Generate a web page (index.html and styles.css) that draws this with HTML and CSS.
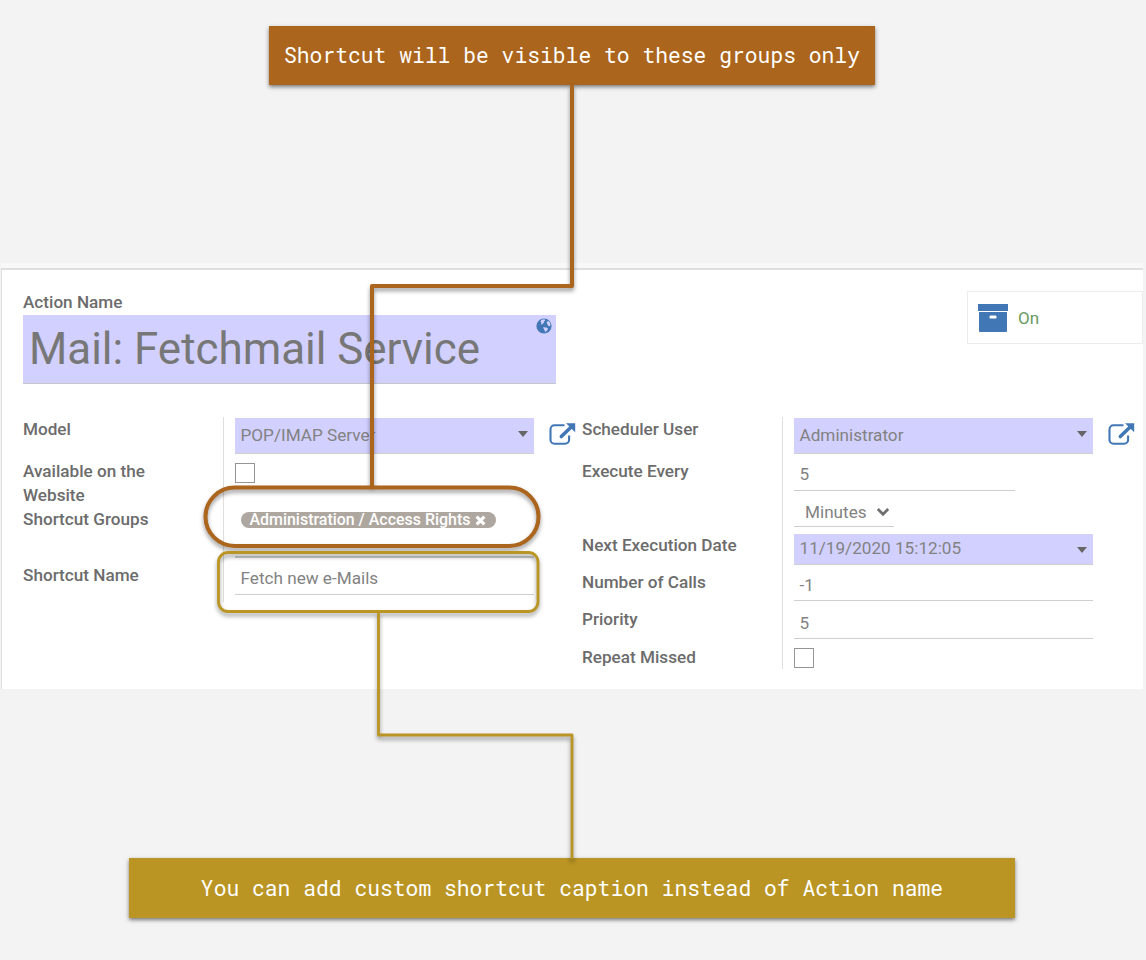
FILE: index.html
```
<!DOCTYPE html>
<html lang="en">
<head>
<meta charset="utf-8">
<title>Mail: Fetchmail Service</title>
<link rel="stylesheet" href="styles.css">
</head>
<body>
<div class="page">
  <div class="callout callout-groups">Shortcut will be visible to these groups only</div>

  <main class="sheet">
    <header class="head">
      <div class="title-block">
        <div class="label">Action Name</div>
        <div class="title-field">
          <span class="title-text">Mail: Fetchmail Service</span>
          <svg class="globe" viewBox="0 0 16 16"><circle cx="8" cy="8" r="7.6" fill="#4277b6"/><path d="M5.6 1.7 8.4 1.3 9.4 2.4 7.8 3.2 8.4 4.2 7.2 5.2 6.1 6.4 4.9 6.2 5.4 4.6 4.4 3.4ZM10.6 4 12.8 3 14.4 5.6 14.3 8 12.8 8.2 11.4 6.6ZM7 9.2 10.4 9.6 12.2 10.8 11 12.4 9.4 14.2 8.4 12Z" fill="#d2d0fe"/></svg>
        </div>
      </div>
      <div class="stat">
        <svg class="archive" viewBox="0 0 30 28"><path fill="#4277b6" d="M0 0h30v7H0zM1 8h28v19a1 1 0 0 1-1 1H2a1 1 0 0 1-1-1z"/><rect x="11.5" y="11.6" width="7" height="3" rx="1.2" fill="#fff"/></svg>
        <span class="stat-text">On</span>
      </div>
    </header>

    <div class="groups">
      <section class="group">
        <div class="row r43"><div class="label">Model</div><div class="cell">
          <div class="field required select">POP/IMAP Server<i class="caret"></i></div>
          <svg class="ext" viewBox="0 0 28 24"><path d="M15.5 3.3H5.5a4 4 0 0 0-4 4v10.4a4 4 0 0 0 4 4h10.6a4 4 0 0 0 4-4v-4.2" fill="none" stroke="#4277b6" stroke-width="2.1"/><path d="M12.3 14.6 22.2 4.9" stroke="#4277b6" stroke-width="3.5" stroke-linecap="round"/><path d="M17 1.2h9.2v9z" fill="#4277b6"/></svg>
        </div></div>
        <div class="row r48"><div class="label up">Available on the<br>Website</div><div class="cell"><span class="check"></span></div></div>
        <div class="row r56"><div class="label up">Shortcut Groups</div><div class="cell"><div class="tags"><span class="tag"><span class="tag-text">Administration / Access Rights</span><svg class="close" viewBox="0 0 10 10"><path d="M1.5 1.5l7 7M8.5 1.5l-7 7" stroke="#fff" stroke-width="2.9"/></svg></span></div></div></div>
        <div class="row r38"><div class="label up">Shortcut Name</div><div class="cell"><div class="field name">Fetch new e-Mails</div></div></div>
      </section>

      <section class="group">
        <div class="row r43"><div class="label">Scheduler User</div><div class="cell">
          <div class="field required select">Administrator<i class="caret"></i></div>
          <svg class="ext" viewBox="0 0 28 24"><path d="M15.5 3.3H5.5a4 4 0 0 0-4 4v10.4a4 4 0 0 0 4 4h10.6a4 4 0 0 0 4-4v-4.2" fill="none" stroke="#4277b6" stroke-width="2.1"/><path d="M12.3 14.6 22.2 4.9" stroke="#4277b6" stroke-width="3.5" stroke-linecap="round"/><path d="M17 1.2h9.2v9z" fill="#4277b6"/></svg>
        </div></div>
        <div class="row r73"><div class="label up">Execute Every</div><div class="cell stack">
          <div class="field number">5</div>
          <div class="field unit">Minutes<svg class="chev" viewBox="0 0 14 10"><path d="M1.8 2 7 7.2 12.2 2" fill="none" stroke="#707070" stroke-width="2.8"/></svg></div>
        </div></div>
        <div class="row r37"><div class="label">Next Execution Date</div><div class="cell"><div class="field required date">11/19/2020 15:12:05<i class="caret"></i></div></div></div>
        <div class="row r38"><div class="label">Number of Calls</div><div class="cell"><div class="field plain">-1</div></div></div>
        <div class="row r37"><div class="label up">Priority</div><div class="cell"><div class="field plain">5</div></div></div>
        <div class="row r24"><div class="label">Repeat Missed</div><div class="cell"><span class="check"></span></div></div>
      </section>
    </div>
  </main>

  <div class="callout callout-name">You can add custom shortcut caption instead of Action name</div>

  <!-- Connectors and rings drawn over the form -->
  <svg class="marks" viewBox="0 0 1146 960">
    <g class="brown"><path d="M572 84.5V286H372V488"/><rect x="205.5" y="487.5" width="333" height="58.5" rx="29.25"/></g>
    <g class="gold"><path d="M378.5 612V735H572V859"/><rect x="218.5" y="552.5" width="319.5" height="59" rx="9.5"/></g>
  </svg>
</div>
</body>
</html>
```
FILE: styles.css
```
* { box-sizing: border-box; }
body { margin: 0; background: #f3f3f3; font-family: Roboto, "Liberation Sans", sans-serif; color: #828282; }
.page { position: relative; width: 1146px; height: 960px; overflow: hidden; display: flex; flex-direction: column; align-items: center; padding: 26px 2px 0 0; background: #f3f3f3; }
.callout { display: flex; align-items: center; justify-content: center; height: 59px; flex: none; color: #fff; font-family: "Roboto Mono", "DejaVu Sans Mono", monospace; font-size: 21.33px; white-space: pre; box-shadow: 0 2px 4px rgba(0,0,0,.5); }
.callout-groups { width: 606px; padding-bottom: 2px; background: #ab651c; }
.callout-name { width: 886px; height: 60px; margin-top: 169px; background: #ba9524; }

.sheet { width: 1142px; height: 421px; margin-top: 183px; flex: none; background: #fff; border-top: 2px solid #dfdfdf; border-left: 1px solid #dedede; box-shadow: 0 -5px 0 #f8f8f8; padding: 20px 0 0 21px; }
.label { font-weight: 500; font-size: 17.15px; line-height: 24px; color: #6c6c6c; white-space: nowrap; }
.up { margin-top: -1px; }
.head { display: flex; justify-content: space-between; height: 127px; }
.title-block { width: 533px; }
.title-field { display: flex; justify-content: space-between; height: 69px; margin-top: 1px; padding: 0 4px 0 6px; background: #d2d0fe; border-bottom: 1px solid #c6c6cc; }
.title-text { font-size: 43.9px; line-height: 69px; color: #777; white-space: nowrap; }
.globe { width: 16px; height: 16px; margin-top: 3px; }
.stat { display: flex; width: 176px; height: 53px; margin-top: 1px; padding: 12px 0 0 10px; border: 1px solid #ececec; }
.archive { width: 30px; height: 28px; }
.stat-text { margin-left: 10px; font-size: 17px; line-height: 28px; font-weight: 400; color: #679a5f; }

.groups { display: flex; gap: 5px; }
.group { width: 554px; }
.row { display: grid; grid-template-columns: 200px 1fr; }
.cell { display: flex; align-items: flex-start; padding-left: 11px; border-left: 1px solid #dedede; }
.r24 { height: 24px; } .r37 { height: 37px; } .r38 { height: 38px; } .r43 { height: 43px; }
.r48 { height: 48px; } .r56 { height: 56px; } .r73 { height: 73px; }
.field { width: 299px; padding-left: 5.5px; font-size: 17.15px; border-bottom: 1px solid #cfcfcf; white-space: nowrap; }
.required { background: #d2d0fe; display: flex; justify-content: space-between; padding-right: 6px; }
.select { height: 36px; margin-top: 1px; line-height: 35px; }
.caret { width: 0; height: 0; margin-top: 13px; border: 5px solid transparent; border-top: 6px solid #666; border-bottom: 0; }
.ext { width: 28px; height: 24px; margin: 5px 0 0 15px; flex: none; }
.check { width: 20px; height: 20px; margin-top: 3px; border: 1px solid #959595; background: #fff; }
.tags { width: 299px; height: 50px; padding: 4px 0 0 5.5px; border-bottom: 2px solid #cfcfcf; }
.tag { display: flex; align-items: center; width: 255px; height: 16px; padding-left: 9px; border-radius: 8px; background: #aea79f; color: #fff; }
.tag-text { width: 225px; font-size: 15.95px; font-weight: 500; line-height: 16px; white-space: nowrap; }
.close { width: 11px; height: 11px; }
.name { height: 31px; line-height: 29px; }
.stack { flex-direction: column; }
.number { width: 221px; height: 31px; line-height: 29px; }
.unit { display: flex; align-items: center; width: 100px; height: 36px; padding: 6px 0 0 11px; }
.chev { width: 14px; height: 10px; margin-left: 9px; }
.date { height: 31px; margin-top: 1px; line-height: 28px; }
.plain { height: 31px; line-height: 30px; }

.marks { position: absolute; left: 0; top: 0; width: 1146px; height: 960px; fill: none; }
.marks g { filter: drop-shadow(0 3px 2px rgba(0,0,0,.4)); stroke-linejoin: round; }
.brown { stroke: #ab651c; stroke-width: 4; }
.gold { stroke: #ba9524; stroke-width: 2.8; }
```
